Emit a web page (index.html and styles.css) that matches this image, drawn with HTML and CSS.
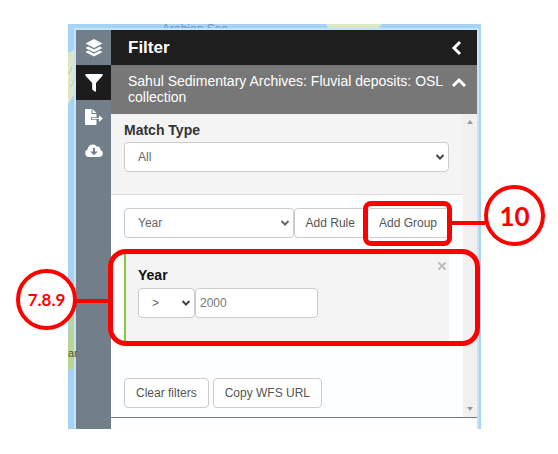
FILE: index.html
```html
<!DOCTYPE html>
<html lang="en">
<head>
<meta charset="utf-8">
<title>Filter</title>
<link rel="stylesheet" href="styles.css">
</head>
<body>
<main class="map">
  <svg class="map-art" aria-hidden="true">
    <path d="M0 29 L8 25 L8 68 L4 74 L0 81Z" fill="#dce6c8"/>
    <path d="M1 50 L4 43 M3 63 L6 56" stroke="#bccd9f" fill="none"/>
    <path d="M2 290 L8 280 L8 338 L4 345 L0 346 L0 318Z" fill="#b8d68f"/>
    <path d="M258 0 H314 L309 6 H261Z" fill="#dce9c9"/>
    <text x="94" y="9" class="sea">Arabian Sea</text>
  </svg>
  <section class="panel">
    <nav class="rail" aria-label="Tools">
      <button class="tool" aria-label="Layers">
        <svg class="icon" viewBox="0 0 18 18"><path d="M9 0 17.5 4.5 9 9 .5 4.5Z M.5 9 3.2 7.5 9 10.5 14.8 7.5 17.5 9 9 13.2Z M.5 13 3.2 11.6 9 14.7 14.8 11.6 17.5 13 9 17.5Z"/></svg>
      </button>
      <button class="tool active" aria-label="Filter">
        <svg class="icon" viewBox="0 0 18 18"><path d="M.5 0H17.5Q18 1 17.3 2L11 9V17.2Q10.5 18 9.7 17.5L7.2 15.6V9L.7 2Q0 1 .5 0Z"/></svg>
      </button>
      <button class="tool" aria-label="Export">
        <svg class="icon" viewBox="0 0 18 18"><path d="M1 1H6.5V6H11.5V9.2H6V11.8H11.5V16Q11.5 17 10.5 17H1Q0 17 0 16V2Q0 1 1 1Z M7.5 1 11.5 5H7.5Z M7 9.9H14V7.2L18 10.5 14 13.8V11.1H7Z"/></svg>
      </button>
      <button class="tool" aria-label="Download">
        <svg class="icon" viewBox="0 0 18 18"><path fill-rule="evenodd" d="M4 15A4 4 0 0 1 2.7 7.3A5 5 0 0 1 11.8 4.6A3 3 0 0 1 15.4 8A3.6 3.6 0 0 1 14.5 15Z M8 6V9.5H5.2L9 13.3 12.8 9.5H10V6Z"/></svg>
      </button>
    </nav>
    <div class="body">
      <header class="title">
        <h1>Filter</h1>
        <button class="plain" aria-label="Collapse panel"><svg class="chevron" viewBox="0 0 16 16"><path d="M11 2 5 8l6 6"/></svg></button>
      </header>
      <div class="layer">
        <h2>Sahul Sedimentary Archives: Fluvial deposits: OSL collection</h2>
        <button class="plain" aria-label="Collapse layer"><svg class="chevron" viewBox="0 0 16 16"><path d="M2 11l6-6 6 6"/></svg></button>
      </div>
      <div class="scroller">
        <form class="content">
          <div class="match">
            <label for="match">Match Type</label>
            <div class="select">
              <select id="match"><option>All</option></select>
              <svg class="caret" viewBox="0 0 10 8"><path d="M1.5 2 5 5.5 8.5 2"/></svg>
            </div>
          </div>
          <div class="rules">
            <div class="adder">
              <div class="select grow">
                <select aria-label="Field"><option>Year</option></select>
                <svg class="caret" viewBox="0 0 10 8"><path d="M1.5 2 5 5.5 8.5 2"/></svg>
              </div>
              <button type="button" class="button">Add Rule</button>
              <div class="marked">
                <button type="button" class="button">Add Group</button>
                <span class="frame frame-small"></span>
                <span class="lead lead-right"></span>
                <span class="number number-right">10</span>
              </div>
            </div>
            <div class="rule marked">
              <div class="rule-head">
                <label for="value">Year</label>
                <button type="button" class="remove" aria-label="Remove rule"><svg viewBox="0 0 10 10"><path d="M1.5 1.5l7 7m0-7l-7 7"/></svg></button>
              </div>
              <div class="condition">
                <div class="select operator">
                  <select aria-label="Operator"><option>&gt;</option></select>
                  <svg class="caret" viewBox="0 0 10 8"><path d="M1.5 2 5 5.5 8.5 2"/></svg>
                </div>
                <input id="value" type="text" value="2000">
              </div>
              <span class="frame frame-large"></span>
              <span class="lead lead-left"></span>
              <span class="number number-left">7.8.9</span>
            </div>
            <div class="actions">
              <button type="button" class="button">Clear filters</button>
              <button type="button" class="button">Copy WFS URL</button>
            </div>
          </div>
        </form>
        <div class="track" aria-hidden="true">
          <svg viewBox="0 0 6 4"><path d="M0 4 3 0 6 4Z"/></svg>
          <svg viewBox="0 0 6 4"><path d="M0 0 3 4 6 0Z"/></svg>
        </div>
      </div>
    </div>
  </section>
  <span class="place">ar</span>
</main>
</body>
</html>
```
FILE: styles.css
```css
* { box-sizing: border-box; }

body {
  margin: 0;
  padding: 24px 77px 25px 68px;
  background: #fff;
  font-family: "Liberation Sans", Arial, sans-serif;
  font-size: 12px;
  color: #555;
}

h1, h2 { margin: 0; }
button, input, select { font: inherit; color: inherit; margin: 0; }
button { cursor: pointer; }
svg { display: block; }

.map {
  position: relative;
  padding: 6px 4px 0 8px;
  background: #a5d3f3;
}
.map-art {
  position: absolute;
  top: 0;
  left: 0;
  width: 100%;
  height: 100%;
}
.sea { font-size: 12px; fill: #7590c4; }
.place {
  position: absolute;
  left: 0;
  top: 323px;
  font-size: 11px;
  line-height: 12px;
  color: #5c5048;
}

.panel {
  position: relative;
  display: flex;
  background: #fcfeff;
  box-shadow: 0 0 0 2px #c6e4f9;
  clip-path: inset(-6px -100px 0 -100px);
}

.rail {
  flex: 0 0 35px;
  display: flex;
  flex-direction: column;
  background: #727f8a;
}
.tool {
  display: grid;
  place-items: center;
  height: 35px;
  padding: 0;
  border: 0;
  background: none;
  color: #fff;
}
.tool:nth-child(n+3) { height: 34px; }
.active { background: #1c1c1c; }
.icon { width: 18px; height: 18px; fill: currentColor; }

.body { flex: 1; min-width: 0; padding-bottom: 11px; }

.title, .layer {
  display: flex;
  justify-content: space-between;
  color: #fff;
}
.title {
  align-items: center;
  height: 35px;
  padding: 0 12px 0 17px;
  background: #1e1e1e;
}
h1 { font-size: 17px; }
.layer {
  align-items: flex-start;
  padding: 8px 10px 9px 17px;
  background: #777;
}
h2 { font-size: 14px; line-height: 16px; font-weight: 400; }
.plain { padding: 0; border: 0; background: none; color: #fff; }
.layer .plain { margin-top: 2px; }
.chevron {
  width: 16px;
  height: 16px;
  fill: none;
  stroke: currentColor;
  stroke-width: 3;
}

.scroller { display: flex; border-bottom: 1px solid #777; }
.content { flex: 1; min-width: 0; }
.track {
  flex: 0 0 14px;
  display: flex;
  flex-direction: column;
  justify-content: space-between;
  align-items: center;
  padding: 6px 0;
  background: #f0f0f0;
}
.track svg { width: 6px; height: 4px; fill: #999; }

.match {
  padding: 6px 14px 22px 13px;
  border-bottom: 1px solid #ddd;
  background: #f4f4f4;
}
label {
  font-size: 14px;
  line-height: 20px;
  font-weight: 700;
  color: #333;
}
.match label { display: block; padding-bottom: 2px; }
.rules { padding: 13px 14px 9px 13px; }

.select { display: grid; align-items: center; }
.select > * { grid-area: 1 / 1; }
select, input, .button {
  height: 30px;
  border: 1px solid #ccc;
  border-radius: 4px;
  background: #fff;
}
select {
  appearance: none;
  width: 100%;
  padding: 0 24px 0 13px;
  color: #666;
}
.caret {
  justify-self: end;
  width: 10px;
  height: 8px;
  margin-right: 4px;
  fill: none;
  stroke: #444;
  stroke-width: 2;
  pointer-events: none;
}
input { width: 123px; padding: 0 4px; color: #777; }
.button { padding: 0 11px; }

.adder { display: flex; }
.adder .caret { stroke: #666; }
.grow { flex: 1; }

.rule {
  height: 90px;
  margin-top: 15px;
  padding: 12px 0 0 12px;
  border-left: 2px solid #8cc63f;
  background: #f4f4f4;
}
.rule-head { display: flex; justify-content: space-between; align-items: flex-start; height: 23px; }
.rule-head label { color: #111; }
.remove { padding: 0 2px; border: 0; background: none; color: #bbb; }
.remove svg { width: 10px; height: 10px; margin-top: -4px; fill: none; stroke: currentColor; stroke-width: 2; }
.condition { display: flex; }
.operator { width: 57px; }
.actions { display: flex; gap: 4px; padding-top: 35px; }

/* Numbered callouts drawn over the controls */
.marked { position: relative; }
.frame, .lead, .number { position: absolute; pointer-events: none; }
.frame { border: 5px solid #f00; }
.frame-small { inset: -7px -3px -8px -4px; border-radius: 8px; }
.frame-large { inset: -4px -31px -3px -18px; border-radius: 18px; }
.lead { height: 4px; background: #f00; }
.lead-right { left: 100%; top: 13px; width: 36px; }
.lead-left { right: 100%; top: 46px; width: 34px; margin-right: 16px; }
.number {
  display: grid;
  place-items: center;
  width: 61px;
  height: 61px;
  border: 4px solid #f00;
  border-radius: 50%;
  background: #fff;
  font-family: Lato, sans-serif;
  font-weight: 700;
  color: #f00;
}
.number-right { left: 100%; top: -23px; margin-left: 35px; font-size: 26px; }
.number-left { right: 100%; top: 16px; margin-right: 49px; font-size: 17px; }
```
